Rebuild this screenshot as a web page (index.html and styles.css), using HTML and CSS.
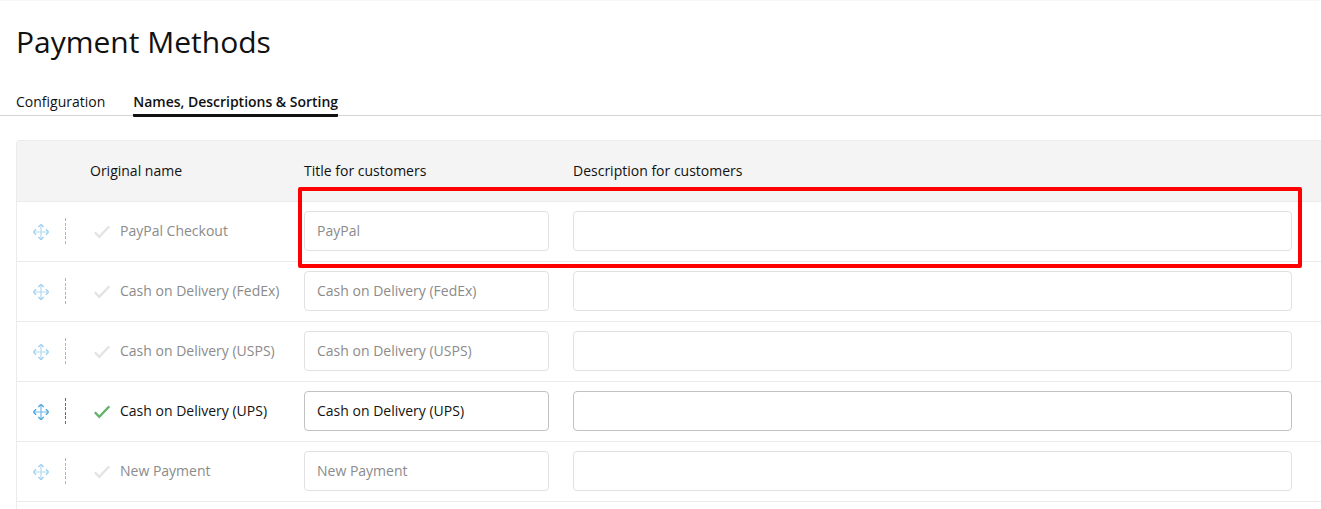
FILE: index.html
```html
<!DOCTYPE html>
<html lang="en">
<head>
<meta charset="utf-8">
<title>Payment Methods</title>
<link rel="stylesheet" href="styles.css">
</head>
<body>
<svg class="sprite" aria-hidden="true">
  <symbol id="move" viewBox="0 0 16 16"><path opacity=".75" d="M8 1v14M1 8h14"/><path d="M5.300 3.200 7.300 1Q8 .3 8.700 1L10.700 3.200M5.300 12.800 7.300 15Q8 15.700 8.700 15L10.700 12.800M3.200 5.300 1 7.300Q.3 8 1 8.700L3.200 10.700M12.800 5.300 15 7.300Q15.700 8 15 8.700L12.800 10.700"/></symbol>
  <symbol id="check" viewBox="0 0 16 14"><path d="M.8 7.200 5.300 11.900 15.300 1.300"/></symbol>
</svg>
<main class="page">
  <h1 class="title">Payment Methods</h1>
  <nav class="tabs">
    <a class="tab">Configuration</a>
    <a class="tab active">Names, Descriptions &amp; Sorting</a>
  </nav>
  <section class="table">
    <div class="row head"><span></span><span>Original name</span><span>Title for customers</span><span>Description for customers</span></div>
    <div class="row disabled">
      <div class="handle"><svg class="move"><use href="#move"/></svg><i class="divider"></i></div>
      <div class="name"><svg class="check"><use href="#check"/></svg><span>PayPal Checkout</span></div>
      <input class="field" value="PayPal"><input class="field">
    </div>
    <div class="row disabled">
      <div class="handle"><svg class="move"><use href="#move"/></svg><i class="divider"></i></div>
      <div class="name"><svg class="check"><use href="#check"/></svg><span>Cash on Delivery (FedEx)</span></div>
      <input class="field" value="Cash on Delivery (FedEx)"><input class="field">
    </div>
    <div class="row disabled">
      <div class="handle"><svg class="move"><use href="#move"/></svg><i class="divider"></i></div>
      <div class="name"><svg class="check"><use href="#check"/></svg><span>Cash on Delivery (USPS)</span></div>
      <input class="field" value="Cash on Delivery (USPS)"><input class="field">
    </div>
    <div class="row">
      <div class="handle"><svg class="move"><use href="#move"/></svg><i class="divider"></i></div>
      <div class="name"><svg class="check"><use href="#check"/></svg><span>Cash on Delivery (UPS)</span></div>
      <input class="field" value="Cash on Delivery (UPS)"><input class="field">
    </div>
    <div class="row disabled">
      <div class="handle"><svg class="move"><use href="#move"/></svg><i class="divider"></i></div>
      <div class="name"><svg class="check"><use href="#check"/></svg><span>New Payment</span></div>
      <input class="field" value="New Payment"><input class="field">
    </div>
    <div class="highlight"></div>
  </section>
</main>
</body>
</html>
```
FILE: styles.css
```css
* { box-sizing: border-box; }
body {
  margin: 0;
  height: 509px;
  overflow: hidden;
  background: #fff;
  color: #111;
  font: 14px/20px "Open Sans", sans-serif;
}
.sprite { display: none; }
.page { height: 509px; border-top: 1px solid #f7f7f7; }
.title {
  margin: 0;
  padding: 21px 16px 0;
  font-size: 30px;
  line-height: 40px;
  font-weight: 400;
}
.tabs {
  display: flex;
  gap: 28px;
  height: 24px;
  margin-top: 30px;
  padding: 0 16px;
  border-bottom: 1px solid #d5d5d5;
}
.tab { height: 25px; }
.tab.active {
  font-weight: 600;
  letter-spacing: -.015px;
  border-bottom: 3px solid #111;
  border-radius: 1px;
}
.table {
  position: relative;
  height: 369px;
  margin: 24px 0 0 16px;
  border: 1px solid #ebebeb;
  border-width: 1px 0 0 1px;
  border-radius: 4px 0 0 0;
}
.row {
  display: grid;
  grid-template-columns: 73px 214px 245px 719px;
  align-items: center;
  height: 60px;
  padding-bottom: 1px;
  border-bottom: 1px solid #ebebeb;
}
.row .field:last-child, .row.head span:last-child { margin-left: 24px; }
.row .field:last-child { width: 719px; }
.head {
  height: 61px;
  padding-bottom: 0;
  background: #f4f4f4;
  border-radius: 3px 0 0 0;
}
.handle { display: flex; align-items: center; gap: 16px; padding-left: 16px; }
.move {
  width: 16px;
  height: 16px;
  margin-top: 2px;
  fill: none;
  stroke: #3fa0df;
  stroke-width: 1.2;
}
.divider {
  width: 1px;
  height: 26px;
  background: repeating-linear-gradient(#6a6a6a 0 3px, transparent 3px 4.6px);
}
.name { display: flex; align-items: center; gap: 10px; padding-left: 4px; white-space: nowrap; }
.check {
  width: 16px;
  height: 14px;
  margin-top: 2px;
  fill: none;
  stroke: #62b36b;
  stroke-width: 2.3;
}
.field {
  width: 245px;
  height: 40px;
  padding: 0 12px 2px;
  border: 1px solid #c2c2c2;
  border-radius: 4px;
  background: #fff;
  color: inherit;
  font: inherit;
}
.disabled .name span { color: #8b8b8b; }
.disabled .field { color: #8b8b8b; border-color: #e1e1e1; }
.disabled .move, .disabled .divider { opacity: .5; }
.disabled .check { stroke: #e3e3e3; }
.highlight {
  position: absolute;
  left: 281px;
  top: 46px;
  width: 1004px;
  height: 81px;
  border: 4px solid #f00;
  border-radius: 2px;
}
```
